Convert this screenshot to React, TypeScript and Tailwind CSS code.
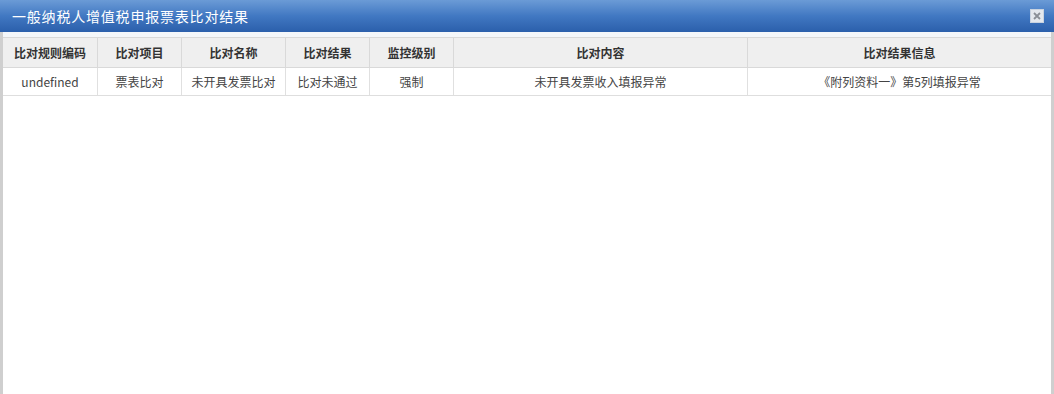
const columns = [
  { title: '比对规则编码', width: 'w-[95px]' },
  { title: '比对项目', width: 'w-[84px]' },
  { title: '比对名称', width: 'w-[104px]' },
  { title: '比对结果', width: 'w-[84px]' },
  { title: '监控级别', width: 'w-[84px]' },
  { title: '比对内容', width: 'w-[294px]' },
  { title: '比对结果信息', width: 'flex-1' },
];

const row = [
  'undefined',
  '票表比对',
  '未开具发票比对',
  '比对未通过',
  '强制',
  '未开具发票收入填报异常',
  '《附列资料一》第5列填报异常',
];

export default function App() {
  return (
    <div
      className="w-[1054px] h-[394px] flex flex-col bg-white overflow-hidden"
      style={{ fontFamily: '"Microsoft YaHei", "Noto Sans CJK SC", sans-serif' }}
    >
      {/* Title bar */}
      <div className="h-[32px] shrink-0 flex items-center justify-between pl-[12px] pr-[10px] bg-gradient-to-b from-[#6b9bd6] via-[#4178c2] to-[#2b5fab]">
        <span className="text-[14px] text-white tracking-[0.8px]">一般纳税人增值税申报票表比对结果</span>
        <button className="w-[14px] h-[14px] flex items-center justify-center bg-[#e4e8ee] border border-[#c9d3e0]">
          <svg width="8" height="8" viewBox="0 0 8 8">
            <path d="M1 1 L7 7 M7 1 L1 7" stroke="#8a8f97" strokeWidth="1.8" />
          </svg>
        </button>
      </div>

      {/* Body */}
      <div className="flex-1 flex flex-col border-l-[3px] border-r-[3px] border-[#cfcfcf] bg-white">
        <div className="h-[5px] bg-[#f4f7fa]" />
        {/* Header row */}
        <div className="flex h-[31px] bg-[#efefef] border-t border-b border-[#d9d9d9]">
          {columns.map((c, i) => (
            <div
              key={c.title}
              className={`${c.width} ${i < columns.length - 1 ? 'border-r border-[#d9d9d9]' : ''} flex items-center justify-center text-[12px] font-bold text-[#333]`}
            >
              {c.title}
            </div>
          ))}
        </div>
        {/* Data row */}
        <div className="flex h-[28px] bg-white border-b border-[#dedede]">
          {row.map((v, i) => (
            <div
              key={i}
              className={`${columns[i].width} ${i < row.length - 1 ? 'border-r border-[#e0e0e0]' : ''} flex items-center justify-center text-[12px] text-[#444]`}
            >
              {v}
            </div>
          ))}
        </div>
      </div>
    </div>
  );
}
